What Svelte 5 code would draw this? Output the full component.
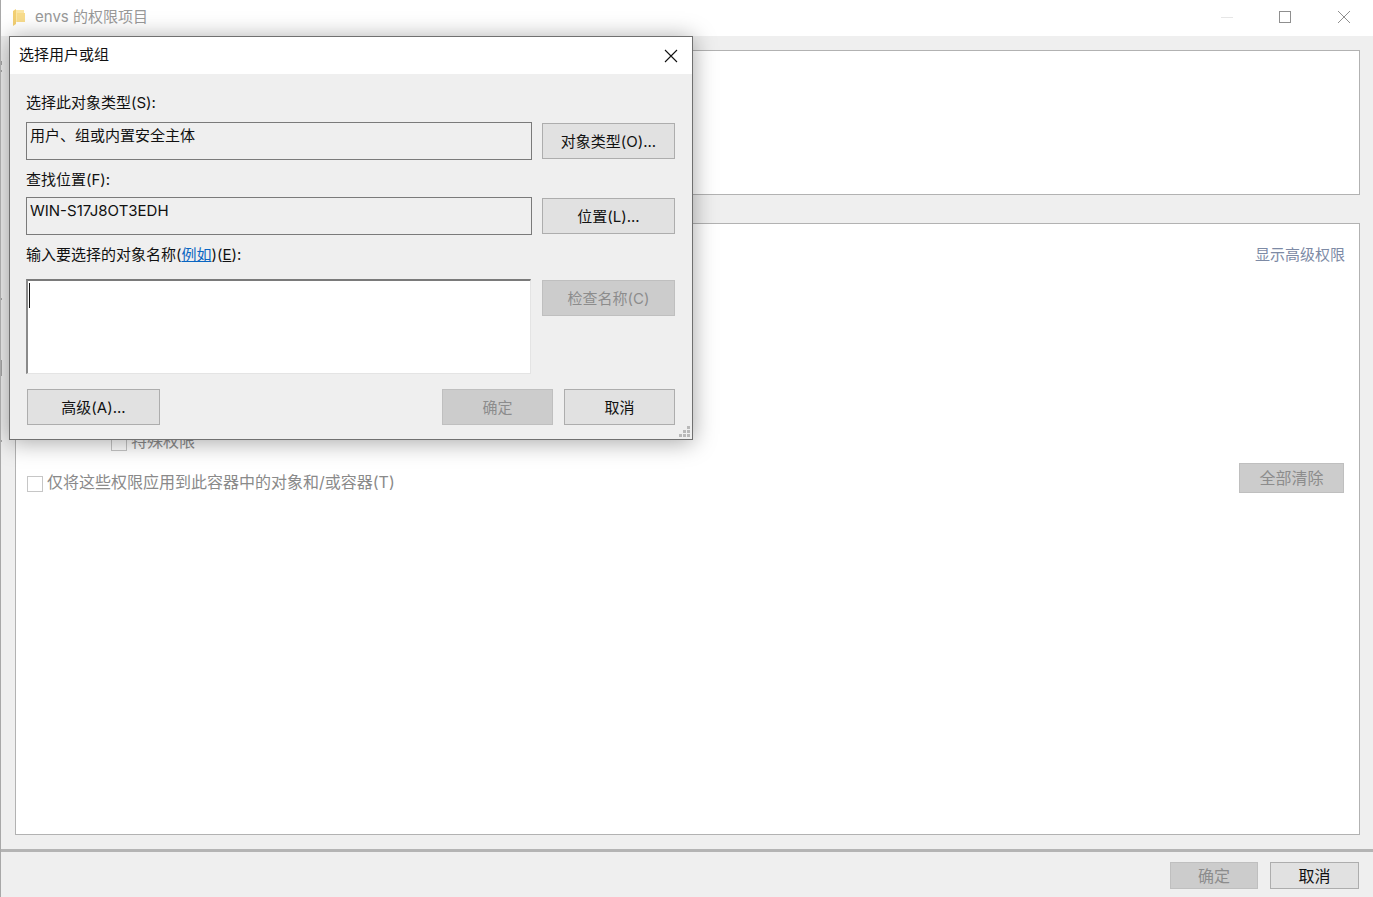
<script>
  const ticks = [
    { top: 61, height: 4 },
    { top: 70, height: 2 },
    { top: 298, height: 2 },
    { top: 360, height: 16 },
    { top: 440, height: 2 }
  ];
</script>

<div class="window">
  {#each ticks as tick}
    <span class="tick" style="top: {tick.top}px; height: {tick.height}px"></span>
  {/each}

  <header class="titlebar">
    <div class="title-left">
      <svg class="folder" viewBox="0 0 12 17" width="12" height="17" aria-hidden="true">
        <path d="M3 1 H11 V13 H3 Z" fill="#fbe6a6" />
        <path d="M4 4 H12 V13 H4 Z" fill="#f8dc8c" />
        <path d="M0 2 L3 0 V15 L0 17 Z" fill="#f2cf72" />
      </svg>
      <span class="title-text">envs 的权限项目</span>
    </div>
    <div class="controls">
      <span class="min"></span>
      <span class="max"></span>
      <svg class="close-bg" viewBox="0 0 14 14" width="14" height="14" aria-hidden="true">
        <path d="M1 1 L13 13 M13 1 L1 13" stroke="#8f8f8f" stroke-width="1" fill="none" />
      </svg>
    </div>
  </header>

  <main class="content">
    <section class="panel top"></section>
    <section class="panel perms">
      <div class="perm-head"><span class="link">显示高级权限</span></div>
      <div class="special">
        <span class="check"></span><span class="dim-label">特殊权限</span>
      </div>
      <div class="apply-row">
        <div class="apply">
          <span class="check"></span>
          <span class="apply-label">仅将这些权限应用到此容器中的对象和/或容器(T)</span>
        </div>
        <button class="btn disabled clear">全部清除</button>
      </div>
    </section>
  </main>

  <footer class="footer">
    <button class="btn disabled foot-ok">确定</button>
    <button class="btn foot-cancel">取消</button>
  </footer>

  <div class="dialog">
    <div class="dlg-title">
      <span>选择用户或组</span>
      <svg viewBox="0 0 14 14" width="14" height="14" aria-hidden="true">
        <path d="M1 1 L13 13 M13 1 L1 13" stroke="#111" stroke-width="1.1" fill="none" />
      </svg>
    </div>
    <div class="dlg-body">
      <div class="lbl first">选择此对象类型(S):</div>
      <div class="row">
        <div class="field">用户、组或内置安全主体</div>
        <button class="btn side">对象类型(O)...</button>
      </div>
      <div class="lbl second">查找位置(F):</div>
      <div class="row">
        <div class="field">WIN-S17J8OT3EDH</div>
        <button class="btn side">位置(L)...</button>
      </div>
      <div class="lbl second">输入要选择的对象名称(<span class="example">例如</span>)(<u>E</u>):</div>
      <div class="row names">
        <div class="names-input"><span class="caret"></span></div>
        <button class="btn side disabled">检查名称(C)</button>
      </div>
      <div class="dlg-foot">
        <button class="btn adv">高级(A)...</button>
        <div class="dlg-actions">
          <button class="btn disabled act">确定</button>
          <button class="btn act">取消</button>
        </div>
      </div>
    </div>
    <svg class="grip" viewBox="0 0 11 11" width="11" height="11" aria-hidden="true">
      <g fill="#b9b9b9">
        <rect x="8" y="0" width="3" height="3" />
        <rect x="4" y="4" width="3" height="3" />
        <rect x="8" y="4" width="3" height="3" />
        <rect x="0" y="8" width="3" height="3" />
        <rect x="4" y="8" width="3" height="3" />
        <rect x="8" y="8" width="3" height="3" />
      </g>
    </svg>
  </div>
</div>

<style>
  :global(body) {
    margin: 0;
    background: #fff;
  }
  .window {
    position: relative;
    width: 1373px;
    height: 897px;
    overflow: hidden;
    display: flex;
    flex-direction: column;
    box-sizing: border-box;
    border-left: 1px solid #a8a8a8;
    background: #efefef;
    font-family: "Inter", "Noto Sans CJK SC", sans-serif;
    font-size: 15px;
    color: #111;
  }
  .tick {
    position: absolute;
    left: -1px;
    width: 2px;
    background: #777;
    opacity: 0.6;
  }
  .titlebar {
    height: 36px;
    flex: none;
    background: #fff;
    display: flex;
    align-items: center;
    justify-content: space-between;
  }
  .title-left {
    display: flex;
    align-items: center;
    padding-left: 12px;
    margin-top: -1px;
  }
  .folder {
    margin-right: 10px;
    display: block;
  }
  .title-text {
    color: #999;
    line-height: 20px;
    margin-top: -1px;
  }
  .controls {
    display: flex;
    align-items: center;
    padding-right: 22px;
    margin-top: -2px;
  }
  .min {
    width: 12px;
    height: 1px;
    background: #e6e6e6;
    margin-right: 46px;
  }
  .max {
    width: 10px;
    height: 10px;
    border: 1px solid #8f8f8f;
    margin-right: 46px;
  }
  .close-bg {
    display: block;
  }
  .content {
    flex: none;
    height: 813px;
    box-sizing: border-box;
    display: flex;
    flex-direction: column;
    padding: 14px 13px 14px 14px;
    gap: 28px;
  }
  .panel {
    background: #fff;
    border: 1px solid #b2b2b2;
    box-sizing: border-box;
  }
  .top {
    height: 145px;
    flex: none;
  }
  .perms {
    height: 612px;
    flex: none;
    display: flex;
    flex-direction: column;
  }
  .perm-head {
    display: flex;
    justify-content: flex-end;
    padding: 21px 14px 0 0;
    height: 20px;
    line-height: 20px;
  }
  .link {
    color: #7d8aa5;
  }
  .special {
    display: flex;
    align-items: center;
    margin: 167px 0 0 95px;
    height: 20px;
    line-height: 20px;
    font-size: 16px;
  }
  .check {
    display: block;
    width: 14px;
    height: 14px;
    flex: none;
    border: 1px solid #c6c6c6;
    background: #fff;
  }
  .special .check {
    margin-top: 2px;
  }
  .dim-label {
    color: #8d8d8d;
    margin: -3px 0 0 4px;
  }
  .apply-row {
    display: flex;
    justify-content: space-between;
    align-items: flex-start;
    margin-top: 11px;
    padding: 0 15px 0 11px;
    font-size: 16px;
  }
  .apply {
    display: flex;
    align-items: center;
    margin-top: 8px;
    line-height: 22px;
  }
  .apply .check {
    margin-top: 4px;
  }
  .apply-label {
    margin-left: 4px;
    color: #8a8a8a;
  }
  .btn {
    box-sizing: border-box;
    display: block;
    padding: 0 0 2px;
    font: inherit;
    color: #111;
    background: #e1e1e1;
    border: 1px solid #adadad;
    text-align: center;
    border-radius: 0;
  }
  .btn.disabled {
    background: #cccccc;
    border-color: #bfbfbf;
    color: #8c8c8c;
  }
  .clear {
    width: 105px;
    height: 30px;
  }
  .footer {
    flex: none;
    height: 48px;
    box-sizing: border-box;
    border-top: 3px solid #b4b4b4;
    display: flex;
    justify-content: flex-end;
    align-items: flex-start;
    gap: 12px;
    padding: 10px 14px 0 0;
    font-size: 16px;
  }
  .foot-ok {
    width: 88px;
    height: 27px;
    padding-bottom: 6px;
  }
  .foot-cancel {
    width: 89px;
    height: 27px;
    padding-bottom: 6px;
  }
  .dialog {
    position: absolute;
    left: 8px;
    top: 36px;
    width: 684px;
    height: 404px;
    box-sizing: border-box;
    border: 1px solid #707070;
    background: #efefef;
    box-shadow: 0 2px 22px rgba(0, 0, 0, 0.36);
  }
  .dlg-title {
    height: 37px;
    background: #fff;
    display: flex;
    align-items: center;
    justify-content: space-between;
    padding: 0 14px 0 9px;
    line-height: 20px;
  }
  .dlg-title span {
    margin-top: -1px;
  }
  .dlg-title svg {
    display: block;
  }
  .dlg-body {
    display: flex;
    flex-direction: column;
    padding: 18px 17px 0 16px;
  }
  .lbl {
    height: 20px;
    line-height: 22px;
  }
  .row {
    display: flex;
    align-items: flex-start;
    justify-content: space-between;
  }
  .first + .row {
    margin-top: 10px;
  }
  .second {
    margin-top: 9px;
  }
  .second + .row {
    margin-top: 8px;
  }
  .second + .row.names {
    margin-top: 15px;
  }
  .field {
    box-sizing: border-box;
    width: 506px;
    height: 38px;
    padding: 3px 0 0 3px;
    line-height: 20px;
    border: 1px solid #7a7a7a;
    background: #efefef;
  }
  .side {
    width: 133px;
    height: 36px;
    margin-top: 1px;
  }
  .names-input {
    box-sizing: border-box;
    width: 505px;
    height: 95px;
    background: #fff;
    border-style: solid;
    border-width: 2px 1px 1px 2px;
    border-color: #7a7a7a #e4e4e4 #e4e4e4 #8a8a8a;
    padding: 2px 0 0 1px;
  }
  .caret {
    display: block;
    width: 1px;
    height: 25px;
    background: #111;
  }
  .example {
    color: #0a66c2;
    text-decoration: underline;
  }
  .dlg-foot {
    display: flex;
    justify-content: space-between;
    margin-top: 15px;
    padding-left: 1px;
  }
  .adv {
    width: 133px;
    height: 36px;
  }
  .dlg-actions {
    display: flex;
    gap: 11px;
  }
  .act {
    width: 111px;
    height: 36px;
  }
  .grip {
    position: absolute;
    right: 2px;
    bottom: 2px;
  }
</style>
